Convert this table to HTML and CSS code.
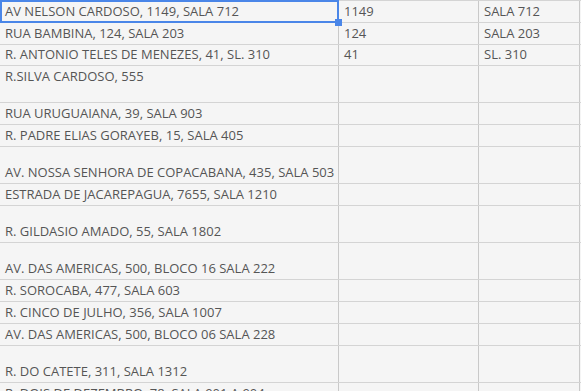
FILE: index.html
```html
<!DOCTYPE html>
<html>
<head>
<meta charset="utf-8">
<link rel="stylesheet" href="styles.css">
</head>
<body>
<div class="sheet">
  <div class="grid">
    <div class="row"><div class="cell">AV NELSON CARDOSO, 1149, SALA 712</div><div class="cell">1149</div><div class="cell">SALA 712</div><div class="cell"></div></div>
    <div class="row"><div class="cell">RUA BAMBINA, 124, SALA 203</div><div class="cell">124</div><div class="cell">SALA 203</div><div class="cell"></div></div>
    <div class="row short"><div class="cell">R. ANTONIO TELES DE MENEZES, 41, SL. 310</div><div class="cell">41</div><div class="cell">SL. 310</div><div class="cell"></div></div>
    <div class="row tall top"><div class="cell">R.SILVA CARDOSO, 555</div><div class="cell"></div><div class="cell"></div><div class="cell"></div></div>
    <div class="row"><div class="cell">RUA URUGUAIANA, 39, SALA 903</div><div class="cell"></div><div class="cell"></div><div class="cell"></div></div>
    <div class="row"><div class="cell">R. PADRE ELIAS GORAYEB, 15, SALA 405</div><div class="cell"></div><div class="cell"></div><div class="cell"></div></div>
    <div class="row tall"><div class="cell">AV. NOSSA SENHORA DE COPACABANA, 435, SALA 503</div><div class="cell"></div><div class="cell"></div><div class="cell"></div></div>
    <div class="row"><div class="cell">ESTRADA DE JACAREPAGUA, 7655, SALA 1210</div><div class="cell"></div><div class="cell"></div><div class="cell"></div></div>
    <div class="row tall"><div class="cell">R. GILDASIO AMADO, 55, SALA 1802</div><div class="cell"></div><div class="cell"></div><div class="cell"></div></div>
    <div class="row tall"><div class="cell">AV. DAS AMERICAS, 500, BLOCO 16 SALA 222</div><div class="cell"></div><div class="cell"></div><div class="cell"></div></div>
    <div class="row"><div class="cell">R. SOROCABA, 477, SALA 603</div><div class="cell"></div><div class="cell"></div><div class="cell"></div></div>
    <div class="row"><div class="cell">R. CINCO DE JULHO, 356, SALA 1007</div><div class="cell"></div><div class="cell"></div><div class="cell"></div></div>
    <div class="row"><div class="cell">AV. DAS AMERICAS, 500, BLOCO 06 SALA 228</div><div class="cell"></div><div class="cell"></div><div class="cell"></div></div>
    <div class="row tall"><div class="cell">R. DO CATETE, 311, SALA 1312</div><div class="cell"></div><div class="cell"></div><div class="cell"></div></div>
    <div class="row"><div class="cell">R. DOIS DE DEZEMBRO, 78, SALA 901 A 904</div><div class="cell"></div><div class="cell"></div><div class="cell"></div></div>
  </div>
  <div class="selection"></div>
  <div class="handle"></div>
</div>
</body>
</html>
```

FILE: styles.css
```css
html, body {
  margin: 0;
  padding: 0;
  background: #f5f5f5;
  overflow: hidden;
}
.sheet {
  position: relative;
  width: 581px;
  height: 391px;
  overflow: hidden;
  font-family: "Open Sans", "Liberation Sans", sans-serif;
  font-size: 13px;
  color: #555555;
}
.grid {
  border-top: 1px solid #d4d4d4;
}
.row {
  display: grid;
  grid-template-columns: 339px 140px 101px 60px;
  height: 22px;
  box-sizing: border-box;
  border-bottom: 1px solid #d4d4d4;
}
.row.short { height: 21px; }
.row.tall { height: 37px; }
.cell {
  box-sizing: border-box;
  border-right: 1px solid #c9c9c9;
  padding: 0 4px 2px 5px;
  display: flex;
  align-items: flex-end;
  line-height: 17px;
  white-space: nowrap;
  overflow: hidden;
}
.row.top .cell {
  align-items: flex-start;
  padding-top: 2px;
}
.selection {
  position: absolute;
  left: 0;
  top: 0;
  width: 339px;
  height: 23px;
  box-sizing: border-box;
  border: 2px solid #4a86e8;
}
.handle {
  position: absolute;
  left: 335px;
  top: 19px;
  width: 7px;
  height: 7px;
  background: #4a86e8;
}
```
